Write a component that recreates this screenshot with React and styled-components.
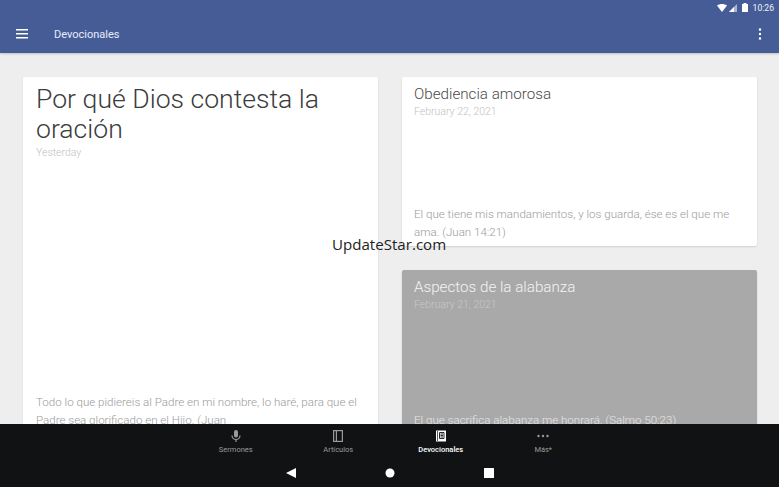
import React from 'react';
import styled, { createGlobalStyle } from 'styled-components';

const GlobalStyle = createGlobalStyle`
  html, body { margin: 0; padding: 0; }
  body { font-family: 'Roboto', sans-serif; background: #eeeeee; }
`;

const Screen = styled.div`
  position: relative;
  width: 779px;
  height: 487px;
  display: flex;
  flex-direction: column;
  overflow: hidden;
`;

const AppBar = styled.header`
  height: 53px;
  flex: none;
  display: flex;
  flex-direction: column;
  background: #465c97;
  color: #fff;
  box-shadow: 0 1px 2px rgba(0, 0, 0, 0.2);
  z-index: 1;
`;

const StatusBar = styled.div`
  height: 15px;
  display: flex;
  align-items: center;
  justify-content: flex-end;
  gap: 2px;
  padding-right: 5px;
  font-size: 8.6px;
  color: #f2f4fa;
`;

const Clock = styled.span`
  margin-left: 3px;
`;

const ToolBar = styled.div`
  flex: 1;
  display: flex;
  align-items: center;
  padding: 0 17px 0 16px;
`;

const PageTitle = styled.h1`
  flex: 1;
  margin: 0 0 0 26px;
  font-size: 11px;
  font-weight: 400;
  color: #e6ecfa;
`;

const Content = styled.main`
  flex: 1;
  min-height: 0;
  display: flex;
  gap: 24px;
  padding: 24px 23px 0;
  overflow: hidden;
`;

const Column = styled.div`
  width: 355px;
  flex: none;
  display: flex;
  flex-direction: column;
  gap: 24px;
`;

const Card = styled.article`
  flex: none;
  height: ${(p) => p.$height}px;
  box-sizing: border-box;
  display: flex;
  flex-direction: column;
  padding: ${(p) => p.$pad};
  border-radius: 2px;
  background: ${(p) => (p.$dimmed ? '#a9a9a9' : '#fff')};
  box-shadow: 0 1px 2px rgba(0, 0, 0, 0.12);
  font-weight: 300;
`;

const BigTitle = styled.h2`
  margin: 0;
  font-size: 26.6px;
  line-height: 30px;
  font-weight: 300;
  color: #3c3c3c;
`;

const SmallTitle = styled.h2`
  margin: 0;
  font-size: 15.2px;
  line-height: 20px;
  font-weight: 300;
  color: ${(p) => (p.$dimmed ? '#f4f4f4' : '#4a4a4a')};
`;

const DateLine = styled.div`
  font-size: 10.5px;
  line-height: 14px;
  margin-top: ${(p) => p.$top}px;
  color: ${(p) => (p.$dimmed ? '#c8c8c8' : '#c2c2c2')};
`;

const Excerpt = styled.p`
  margin: auto 0 0;
  font-size: 11.57px;
  line-height: 18px;
  color: ${(p) => (p.$dimmed ? '#e6e6e6' : '#9a9a9a')};
`;

const BottomBar = styled.footer`
  height: 63px;
  flex: none;
  display: flex;
  flex-direction: column;
  background: #111213;
  z-index: 1;
`;

const Tabs = styled.nav`
  height: 33px;
  display: flex;
  justify-content: center;
  padding-top: 4px;
`;

const Tab = styled.div`
  width: 102.5px;
  display: flex;
  flex-direction: column;
  align-items: center;
  gap: 1px;
  font-size: 7.5px;
  font-weight: ${(p) => (p.$active ? 500 : 400)};
  color: ${(p) => (p.$active ? '#fff' : '#9a9a9a')};
`;

const TabIcon = styled.svg`
  width: 16px;
  height: 16px;
  display: block;
`;

const SystemNav = styled.div`
  flex: 1;
  display: flex;
  align-items: center;
  justify-content: center;
  gap: 89px;
  padding-bottom: 3px;
`;

const Watermark = styled.div`
  position: absolute;
  left: 332px;
  top: 234px;
  z-index: 2;
  font-family: 'Open Sans', sans-serif;
  font-size: 15.1px;
  line-height: 20px;
  color: #222;
`;

const App = () => (
  <Screen>
    <GlobalStyle />
    <AppBar>
      <StatusBar>
        <svg width="10" height="8" viewBox="0 0 10 8">
          <path d="M0 1.5C3 -0.5 7 -0.5 10 1.5L5 8z" fill="#fff" />
        </svg>
        <svg width="8" height="8" viewBox="0 0 8 8">
          <path d="M8 0v8H0z" fill="#fff" opacity="0.55" />
          <path d="M5 3v5H0z" fill="#fff" />
        </svg>
        <svg width="6" height="9" viewBox="0 0 6 9" style={{ marginLeft: 3 }}>
          <path d="M1.5 0h3v1H6v8H0V1h1.5z" fill="#fff" />
        </svg>
        <Clock>10:26</Clock>
      </StatusBar>
      <ToolBar>
        <svg width="12" height="10" viewBox="0 0 12 10">
          <path d="M0 0h12v1.5H0zM0 4h12v1.5H0zM0 8h12v1.5H0z" fill="#fff" />
        </svg>
        <PageTitle>Devocionales</PageTitle>
        <svg width="4" height="12" viewBox="0 0 4 12">
          <circle cx="2" cy="1.5" r="1.2" fill="#fff" />
          <circle cx="2" cy="6" r="1.2" fill="#fff" />
          <circle cx="2" cy="10.5" r="1.2" fill="#fff" />
        </svg>
      </ToolBar>
    </AppBar>

    <Content>
      <Column>
        <Card $height={360} $pad="7px 13px 8px">
          <BigTitle>Por qué Dios contesta la oración</BigTitle>
          <DateLine $top={2}>Yesterday</DateLine>
          <Excerpt>
            Todo lo que pidiereis al Padre en mi nombre, lo haré, para que el Padre sea glorificado en el Hijo. (Juan
          </Excerpt>
        </Card>
      </Column>
      <Column>
        <Card $height={169} $pad="7px 12px 5px">
          <SmallTitle>Obediencia amorosa</SmallTitle>
          <DateLine $top={1}>February 22, 2021</DateLine>
          <Excerpt>El que tiene mis mandamientos, y los guarda, ése es el que me ama. (Juan 14:21)</Excerpt>
        </Card>
        <Card $height={169} $pad="7px 12px 10px" $dimmed>
          <SmallTitle $dimmed>Aspectos de la alabanza</SmallTitle>
          <DateLine $dimmed $top={1}>February 21, 2021</DateLine>
          <Excerpt $dimmed>El que sacrifica alabanza me honrará. (Salmo 50:23)</Excerpt>
        </Card>
      </Column>
    </Content>

    <BottomBar>
      <Tabs>
        <Tab>
          <TabIcon viewBox="0 0 16 16">
            <rect x="6" y="2" width="4" height="7.5" rx="2" fill="#9a9a9a" />
            <path d="M4 7.5a4 4 0 0 0 8 0M8 11.5V14" fill="none" stroke="#9a9a9a" strokeWidth="1.2" />
          </TabIcon>
          Sermones
        </Tab>
        <Tab>
          <TabIcon viewBox="0 0 16 16">
            <rect x="3.6" y="2.6" width="8.8" height="10.8" fill="none" stroke="#9a9a9a" strokeWidth="1.2" />
            <path d="M6.4 2.6v10.8" stroke="#9a9a9a" strokeWidth="1.2" />
          </TabIcon>
          Artículos
        </Tab>
        <Tab $active>
          <TabIcon viewBox="0 0 16 16">
            <path d="M3 2.5h10v11H3z" fill="#fff" />
            <path d="M6.5 4.5h4.5v6H6.5zM7.5 6h2.5M7.5 7.5h2.5M7.5 9h2.5" fill="none" stroke="#111213" strokeWidth="0.9" />
            <path d="M4.5 3v10" stroke="#111213" strokeWidth="0.7" />
          </TabIcon>
          Devocionales
        </Tab>
        <Tab>
          <TabIcon viewBox="0 0 16 16">
            <circle cx="3.5" cy="8" r="1.2" fill="#9a9a9a" />
            <circle cx="8" cy="8" r="1.2" fill="#9a9a9a" />
            <circle cx="12.5" cy="8" r="1.2" fill="#9a9a9a" />
          </TabIcon>
          Más*
        </Tab>
      </Tabs>
      <SystemNav>
        <svg width="10" height="10" viewBox="0 0 10 10">
          <path d="M10 0v10L0 5z" fill="#fff" />
        </svg>
        <svg width="10" height="10" viewBox="0 0 10 10">
          <circle cx="5" cy="5" r="4.5" fill="#fff" />
        </svg>
        <svg width="10" height="10" viewBox="0 0 10 10">
          <rect width="10" height="10" rx="0.5" fill="#fff" />
        </svg>
      </SystemNav>
    </BottomBar>

    <Watermark>UpdateStar.com</Watermark>
  </Screen>
);

export default App;
